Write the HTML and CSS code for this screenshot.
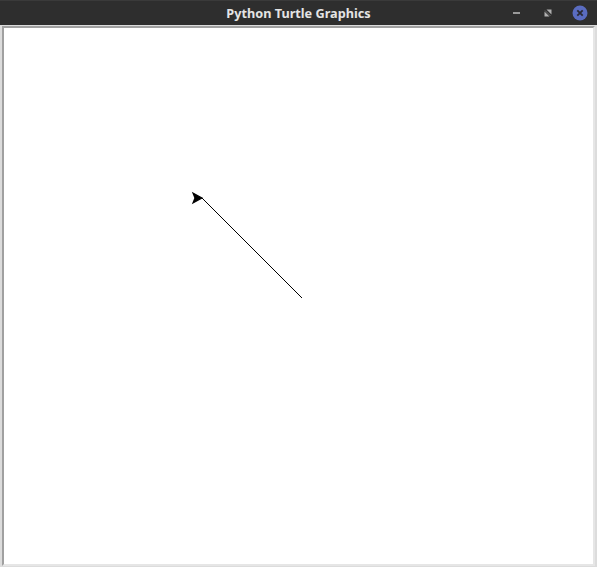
FILE: index.html
```html
<!DOCTYPE html>
<html>
<head>
<meta charset="utf-8">
<title>Python Turtle Graphics</title>
<link rel="stylesheet" href="styles.css">
</head>
<body>
<div class="window">
  <header class="titlebar">
    <div class="title">Python Turtle Graphics</div>
    <div class="controls">
      <svg class="btn" width="14" height="14" viewBox="0 0 14 14"><rect x="3" y="6" width="7" height="2" fill="#9a9a9a"/></svg>
      <svg class="btn" width="14" height="14" viewBox="0 0 14 14"><path d="M5.5 3.5h5v5z M3.5 5.5l5 5h-5z" fill="#b0b0b0"/><path d="M4 4.5l5.5 5.5" stroke="#7a7a7a" stroke-width="0.8"/></svg>
      <svg class="btn close" width="16" height="16" viewBox="0 0 16 16"><circle cx="8" cy="8" r="7.5" fill="#5a6cc0"/><path d="M5.3 5.3l5.4 5.4M10.7 5.3l-5.4 5.4" stroke="#2a2a33" stroke-width="1.8"/></svg>
    </div>
  </header>
  <main class="body">
    <div class="canvas">
      <svg class="drawing" width="589" height="536" viewBox="0 0 589 536">
        <line x1="298.5" y1="270.5" x2="198.5" y2="170.5" stroke="#000" stroke-width="1" shape-rendering="crispEdges"/>
        <polygon points="198,170 189,165 191,170 189,175" fill="#000" stroke="#000" stroke-width="1.2" stroke-linejoin="miter"/>
      </svg>
    </div>
  </main>
</div>
</body>
</html>
```
FILE: styles.css
```css
html, body {
  margin: 0;
  padding: 0;
  background: #dcdcdc;
  width: 597px;
  height: 567px;
  overflow: hidden;
}
.window {
  display: flex;
  flex-direction: column;
  width: 597px;
  height: 567px;
}
.titlebar {
  position: relative;
  height: 25px;
  background: #2e2e2e;
  border-top: 1px solid #3a3a3a;
  box-sizing: border-box;
  display: flex;
  align-items: center;
  justify-content: center;
}
.title {
  font-family: "Noto Sans", "DejaVu Sans", sans-serif;
  font-weight: 700;
  font-size: 12.7px;
  color: #e4e4e4;
  line-height: 24px;
}
.controls {
  position: absolute;
  right: 9px;
  top: 4px;
  display: flex;
  align-items: center;
  gap: 17px;
}
.btn {
  display: block;
}
.body {
  padding: 1px 0 0 2px;
}
.canvas {
  width: 589px;
  height: 536px;
  background: #ffffff;
  border-left: 2px solid #a0a0a0;
  border-top: 2px solid #a0a0a0;
  border-right: 2px solid #e6e6e6;
  border-bottom: 2px solid #e6e6e6;
}
.drawing {
  display: block;
}
```
